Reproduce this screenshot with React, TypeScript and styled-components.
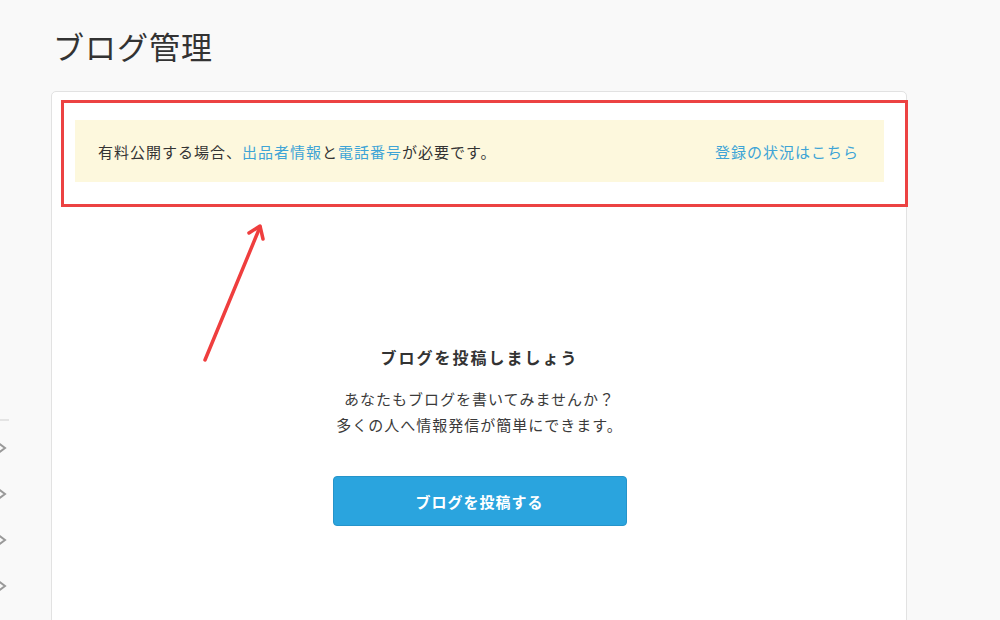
import React from 'react'
import styled, { createGlobalStyle } from 'styled-components'

const GlobalStyle = createGlobalStyle`
  html, body {
    margin: 0;
    padding: 0;
    background: #f9f9f9;
    font-family: "Noto Sans CJK JP", "Noto Sans", sans-serif;
    color: #333;
  }
`

const menuItems = ['home', 'notes', 'sales', 'settings']

const Chevron = () => (
  <svg width="10" height="14" viewBox="0 0 10 14">
    <polyline points="-3,1 5,7 -3,13" fill="none" stroke="#999" strokeWidth="2" />
  </svg>
)

const Arrow = () => (
  <svg width="80" height="150" viewBox="0 0 80 150">
    <g stroke="#ef3e3e" strokeWidth="3.5" fill="none" strokeLinecap="round" strokeLinejoin="round">
      <line x1="14" y1="144" x2="69" y2="11" />
      <polyline points="58,17 69,10 72,23" />
    </g>
  </svg>
)

const App: React.FC = () => {
  return (
    <>
      <GlobalStyle />
      <StyledPage>
        <StyledSidebar>
          <StyledSidebarDivider />
          {menuItems.map((item) => (
            <StyledMenuItem key={item}>
              <Chevron />
            </StyledMenuItem>
          ))}
        </StyledSidebar>
        <StyledMain>
          <StyledTitle>ブログ管理</StyledTitle>
          <StyledCard>
            <StyledNotice>
              <span>
                有料公開する場合、<StyledLink href="#">出品者情報</StyledLink>と
                <StyledLink href="#">電話番号</StyledLink>が必要です。
              </span>
              <StyledLink href="#">登録の状況はこちら</StyledLink>
            </StyledNotice>
            <StyledEmpty>
              <StyledEmptyTitle>ブログを投稿しましょう</StyledEmptyTitle>
              <StyledEmptyText>
                あなたもブログを書いてみませんか？
                <br />
                多くの人へ情報発信が簡単にできます。
              </StyledEmptyText>
              <StyledButton>ブログを投稿する</StyledButton>
            </StyledEmpty>
            <StyledHighlight />
            <StyledArrow>
              <Arrow />
            </StyledArrow>
          </StyledCard>
        </StyledMain>
      </StyledPage>
    </>
  )
}

const StyledPage = styled.div`
  display: flex;
  width: 1000px;
  height: 620px;
  overflow: hidden;
`

const StyledSidebar = styled.div`
  width: 10px;
  flex-shrink: 0;
  padding-top: 419px;
  overflow: hidden;
`

const StyledSidebarDivider = styled.div`
  width: 9px;
  height: 2px;
  background: #e4e4e4;
  margin-bottom: 4px;
`

const StyledMenuItem = styled.div`
  display: flex;
  align-items: center;
  height: 46px;
`

const StyledMain = styled.div`
  margin-left: 41px;
  width: 856px;
  flex-shrink: 0;
`

const StyledTitle = styled.h1`
  margin: 0;
  padding: 25px 0 0 2px;
  font-size: 31px;
  font-weight: 400;
  letter-spacing: 1px;
  line-height: 42px;
  height: 66px;
  color: #333;
`

const StyledCard = styled.div`
  position: relative;
  background: #fff;
  border: 1px solid #e2e2e2;
  border-radius: 5px;
  padding: 28px 22px 0 23px;
  height: 600px;
`

const StyledNotice = styled.div`
  display: flex;
  align-items: center;
  justify-content: space-between;
  height: 62px;
  padding: 0 25px 0 23px;
  background: #fdf8dd;
  font-size: 15px;
  letter-spacing: 1px;
  color: #333;
`

const StyledLink = styled.a`
  color: #3ea4d6;
  text-decoration: none;
`

const StyledEmpty = styled.div`
  display: flex;
  flex-direction: column;
  align-items: center;
  padding-top: 163px;
`

const StyledEmptyTitle = styled.h2`
  margin: 0;
  font-size: 16px;
  font-weight: 700;
  letter-spacing: 2px;
  line-height: 24px;
  color: #333;
`

const StyledEmptyText = styled.p`
  margin: 17px 0 0;
  font-size: 15px;
  letter-spacing: 1px;
  line-height: 26px;
  text-align: center;
  color: #3a3a3a;
`

const StyledButton = styled.button`
  margin-top: 38px;
  width: 294px;
  height: 50px;
  background: #2aa4de;
  border: 1px solid #2594ca;
  border-radius: 4px;
  color: #fff;
  font-family: inherit;
  font-size: 15px;
  font-weight: 700;
  letter-spacing: 1px;
  cursor: pointer;
`

const StyledHighlight = styled.div`
  position: absolute;
  left: 9px;
  top: 8px;
  width: 841px;
  height: 101px;
  border: 3px solid #ec4242;
  pointer-events: none;
`

const StyledArrow = styled.div`
  position: absolute;
  left: 139px;
  top: 124px;
  width: 80px;
  height: 150px;
  pointer-events: none;
`

export default App
